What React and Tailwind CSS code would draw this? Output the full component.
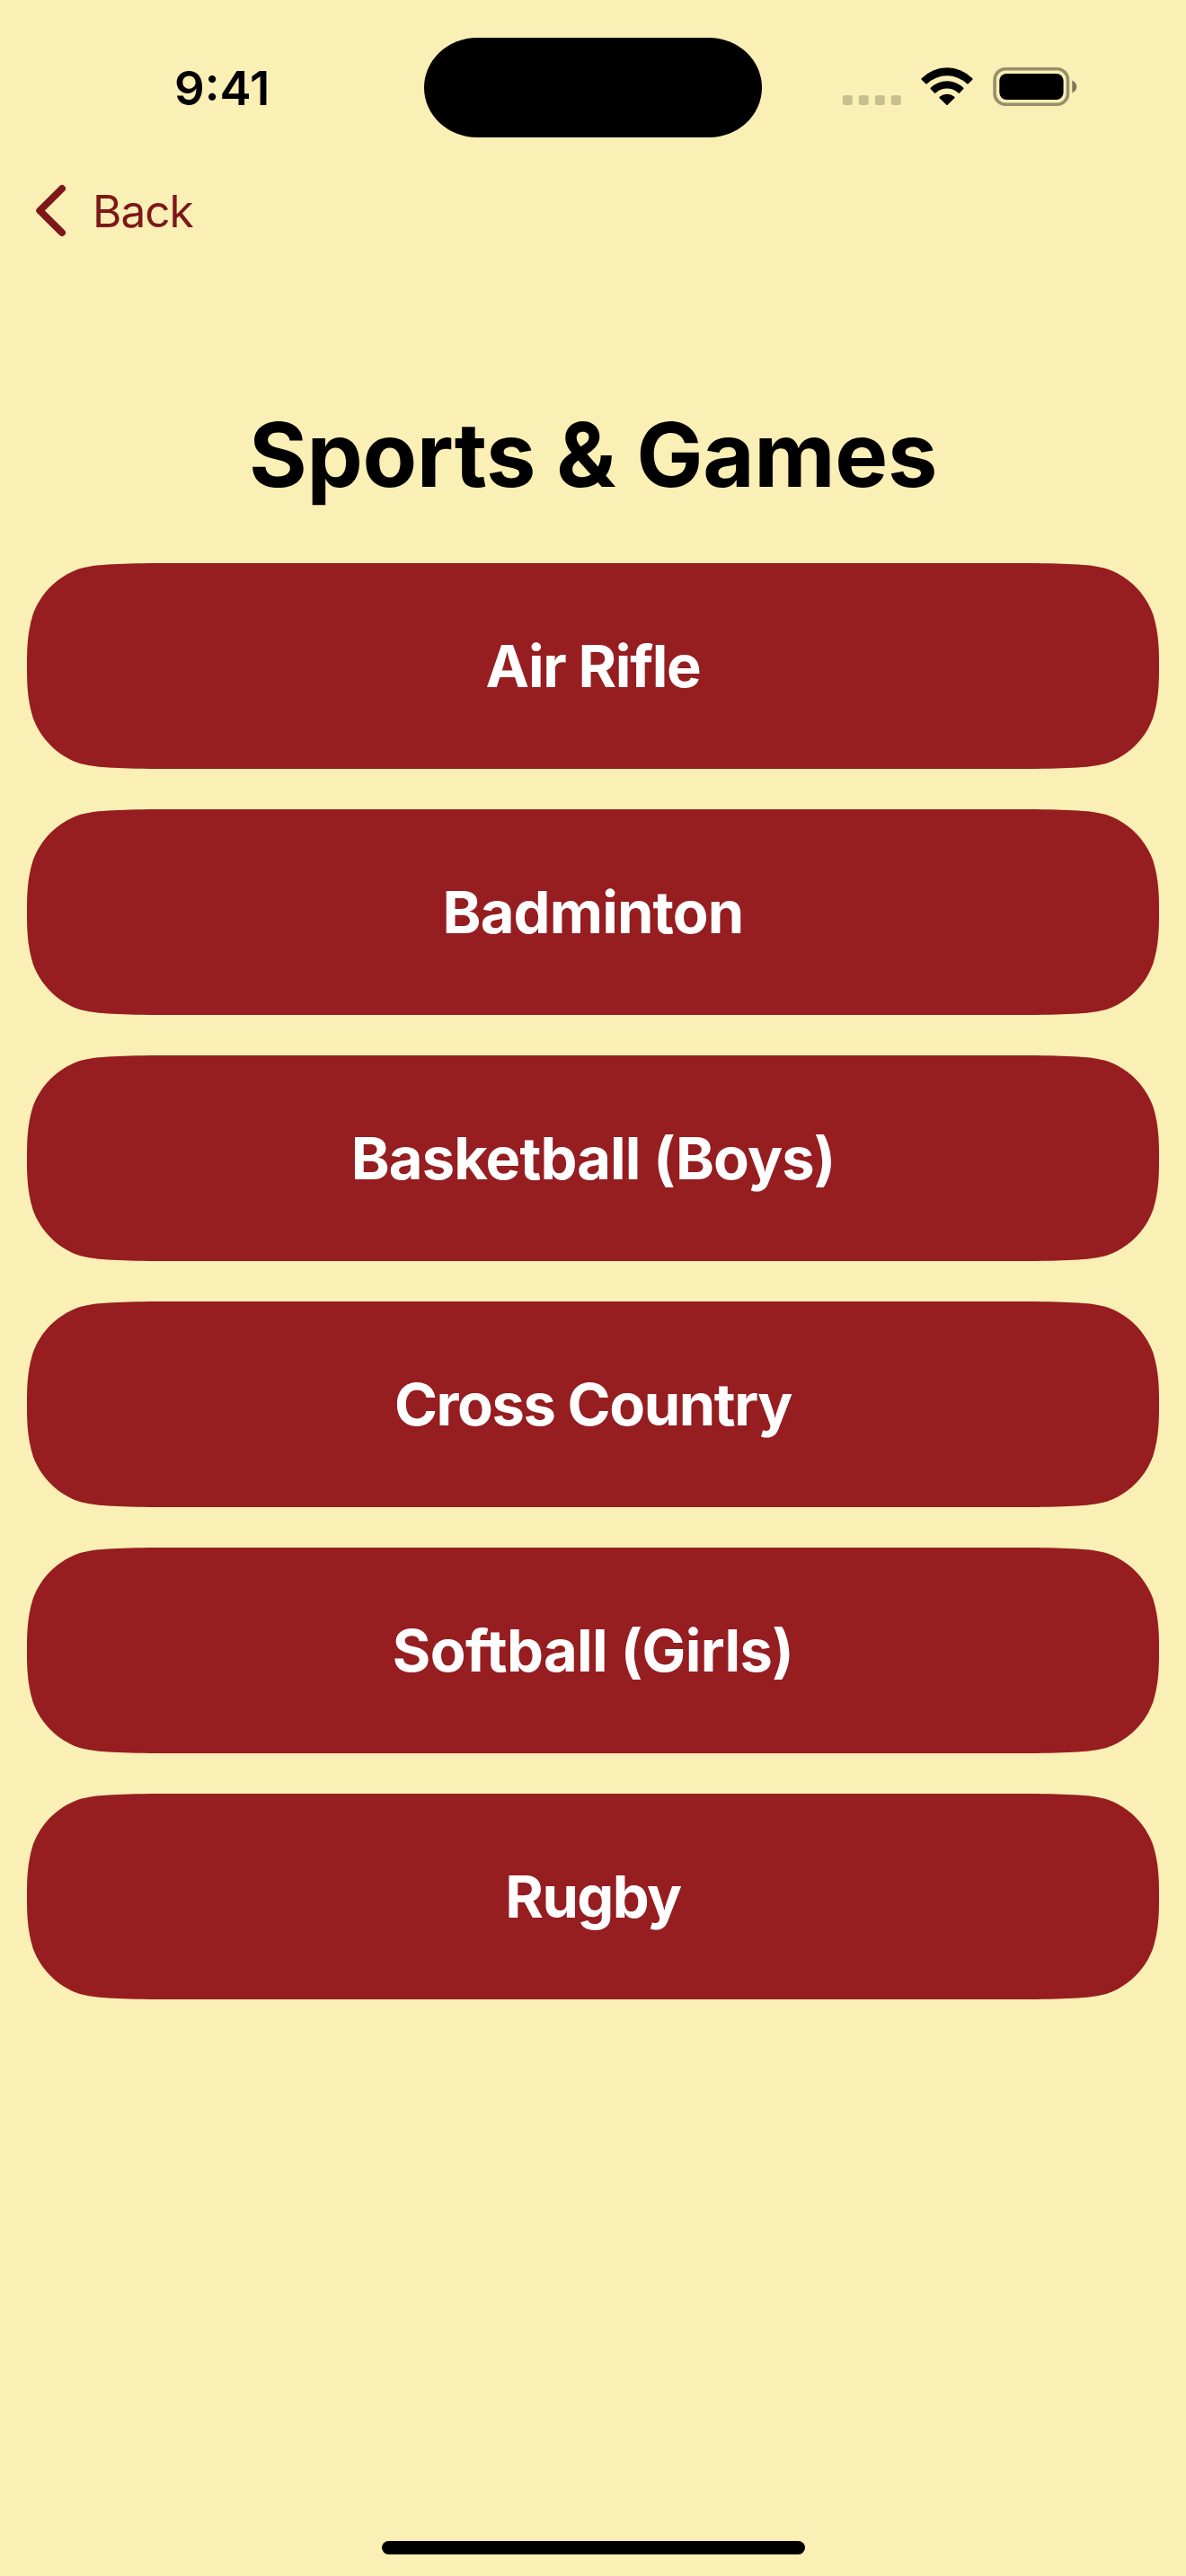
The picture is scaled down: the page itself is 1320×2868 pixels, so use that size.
const activities = [
  { name: "Air Rifle", tracking: "tracking-[-1.3px]" },
  { name: "Badminton", tracking: "tracking-[-0.85px]" },
  { name: "Basketball (Boys)", tracking: "tracking-[-0.87px]" },
  { name: "Cross Country", tracking: "tracking-[-1.4px]" },
  { name: "Softball (Girls)", tracking: "tracking-[-0.64px]" },
  { name: "Rugby", tracking: "tracking-[-1.55px]" },
];

function CellularDots() {
  return (
    <svg width="66" height="43" viewBox="0 0 66 43" className="fill-black/20">
      <rect x="0.8" y="31" width="11" height="11" rx="3.3" />
      <rect x="18.8" y="31" width="11" height="11" rx="3.3" />
      <rect x="36.8" y="31" width="11" height="11" rx="3.3" />
      <rect x="54.8" y="31" width="11" height="11" rx="3.3" />
    </svg>
  );
}

function Wifi() {
  return (
    <svg width="58" height="43" viewBox="0 0 58 43" className="fill-black">
      <path d="M0.7 12.3A39.5 39.5 0 0 1 57.3 12.3Q58 13 57.3 13.7L52.7 18.2Q52 18.8 51.3 18.2A32.5 32.5 0 0 0 6.7 18.2Q6 18.8 5.3 18.2L0.7 13.7Q0 13 0.7 12.3Z" />
      <path d="M10.7 22.7A26 26 0 0 1 47.3 22.7Q48 23.4 47.3 24.1L43 28.4Q42.3 29.1 41.6 28.4A19 19 0 0 0 16.4 28.4Q15.7 29.1 15 28.4L10.7 24.1Q10 23.4 10.7 22.7Z" />
      <path d="M20.7 32.8A12.6 12.6 0 0 1 37.3 32.8Q38 33.5 37.3 34.2L29.6 41.8Q29 42.3 28.4 41.8L20.7 34.2Q20 33.5 20.7 32.8Z" />
    </svg>
  );
}

function Battery() {
  return (
    <svg width="94" height="43" viewBox="0 0 94 43">
      <rect x="2.1" y="1.8" width="81.4" height="39.4" rx="12" fill="none" stroke="#000" strokeOpacity="0.4" strokeWidth="3.6" />
      <rect x="7.3" y="7" width="71.3" height="29" rx="8" />
      <path d="M88.3 14.5C91.3 15.8 93.3 18.3 93.3 21.5C93.3 24.7 91.3 27.2 88.3 28.5Z" fillOpacity="0.5" />
    </svg>
  );
}

function StatusBar() {
  return (
    <header className="flex h-[194px] pt-[41.5px]">
      <time className="mt-6 w-[471.7px] pl-[194px] text-[52.7px] leading-[64px] font-semibold">9:41</time>
      <div className="h-[111px] w-[376.6px] rounded-[59px/55.5px] bg-black" />
      <div className="flex w-[471.7px] gap-[22px] pt-[33.5px] pl-[88.7px]">
        <CellularDots />
        <Wifi />
        <Battery />
      </div>
    </header>
  );
}

export default function App() {
  return (
    <div className="flex h-[2868px] w-[1320px] flex-col bg-[#faefb4] font-[Inter,sans-serif] text-black">
      <StatusBar />
      <nav className="flex h-[82px] items-center pl-[39px] text-[#7d171a]">
        <svg width="36" height="60" viewBox="0 0 36 60" fill="none" stroke="currentColor" strokeWidth="8" strokeLinecap="round" strokeLinejoin="round">
          <path d="M30 5L5.3 29.5L30 54" />
        </svg>
        <span className="ml-7 text-[49.5px] leading-[60px] tracking-[-0.95px]">Back</span>
      </nav>
      <main className="px-[30px] pt-[170px]">
        <h1 className="text-center text-[99px] leading-[120px] font-bold tracking-[-0.36px]">Sports &amp; Games</h1>
        <div className="mt-[61px] flex flex-col gap-[45px]">
          {activities.map(({ name, tracking }) => (
            <button
              key={name}
              className={`flex h-[229px] w-full items-center justify-center bg-[#961d20] text-[65px] leading-[79px] font-bold text-white [clip-path:path('M0,114.5C0,97.96,0,78.16,6.74,56.83C15.22,33.55,33.55,15.22,56.83,6.74C72.5,1.3,100,0.5,145,0L1115,0C1160,0.5,1187.5,1.3,1203.17,6.74C1226.45,15.22,1244.78,33.55,1253.26,56.83C1260,78.16,1260,97.96,1260,114.5C1260,131.04,1260,150.84,1253.26,172.17C1244.78,195.45,1226.45,213.78,1203.17,222.26C1187.5,227.7,1160,228.5,1115,229L145,229C100,228.5,72.5,227.7,56.83,222.26C33.55,213.78,15.22,195.45,6.74,172.17C0,150.84,0,131.04,0,114.5Z')] ${tracking}`}
            >
              {name}
            </button>
          ))}
        </div>
      </main>
      <footer className="mt-auto flex justify-center pb-6">
        <div className="h-[15px] w-[471px] rounded-full bg-black" />
      </footer>
    </div>
  );
}
